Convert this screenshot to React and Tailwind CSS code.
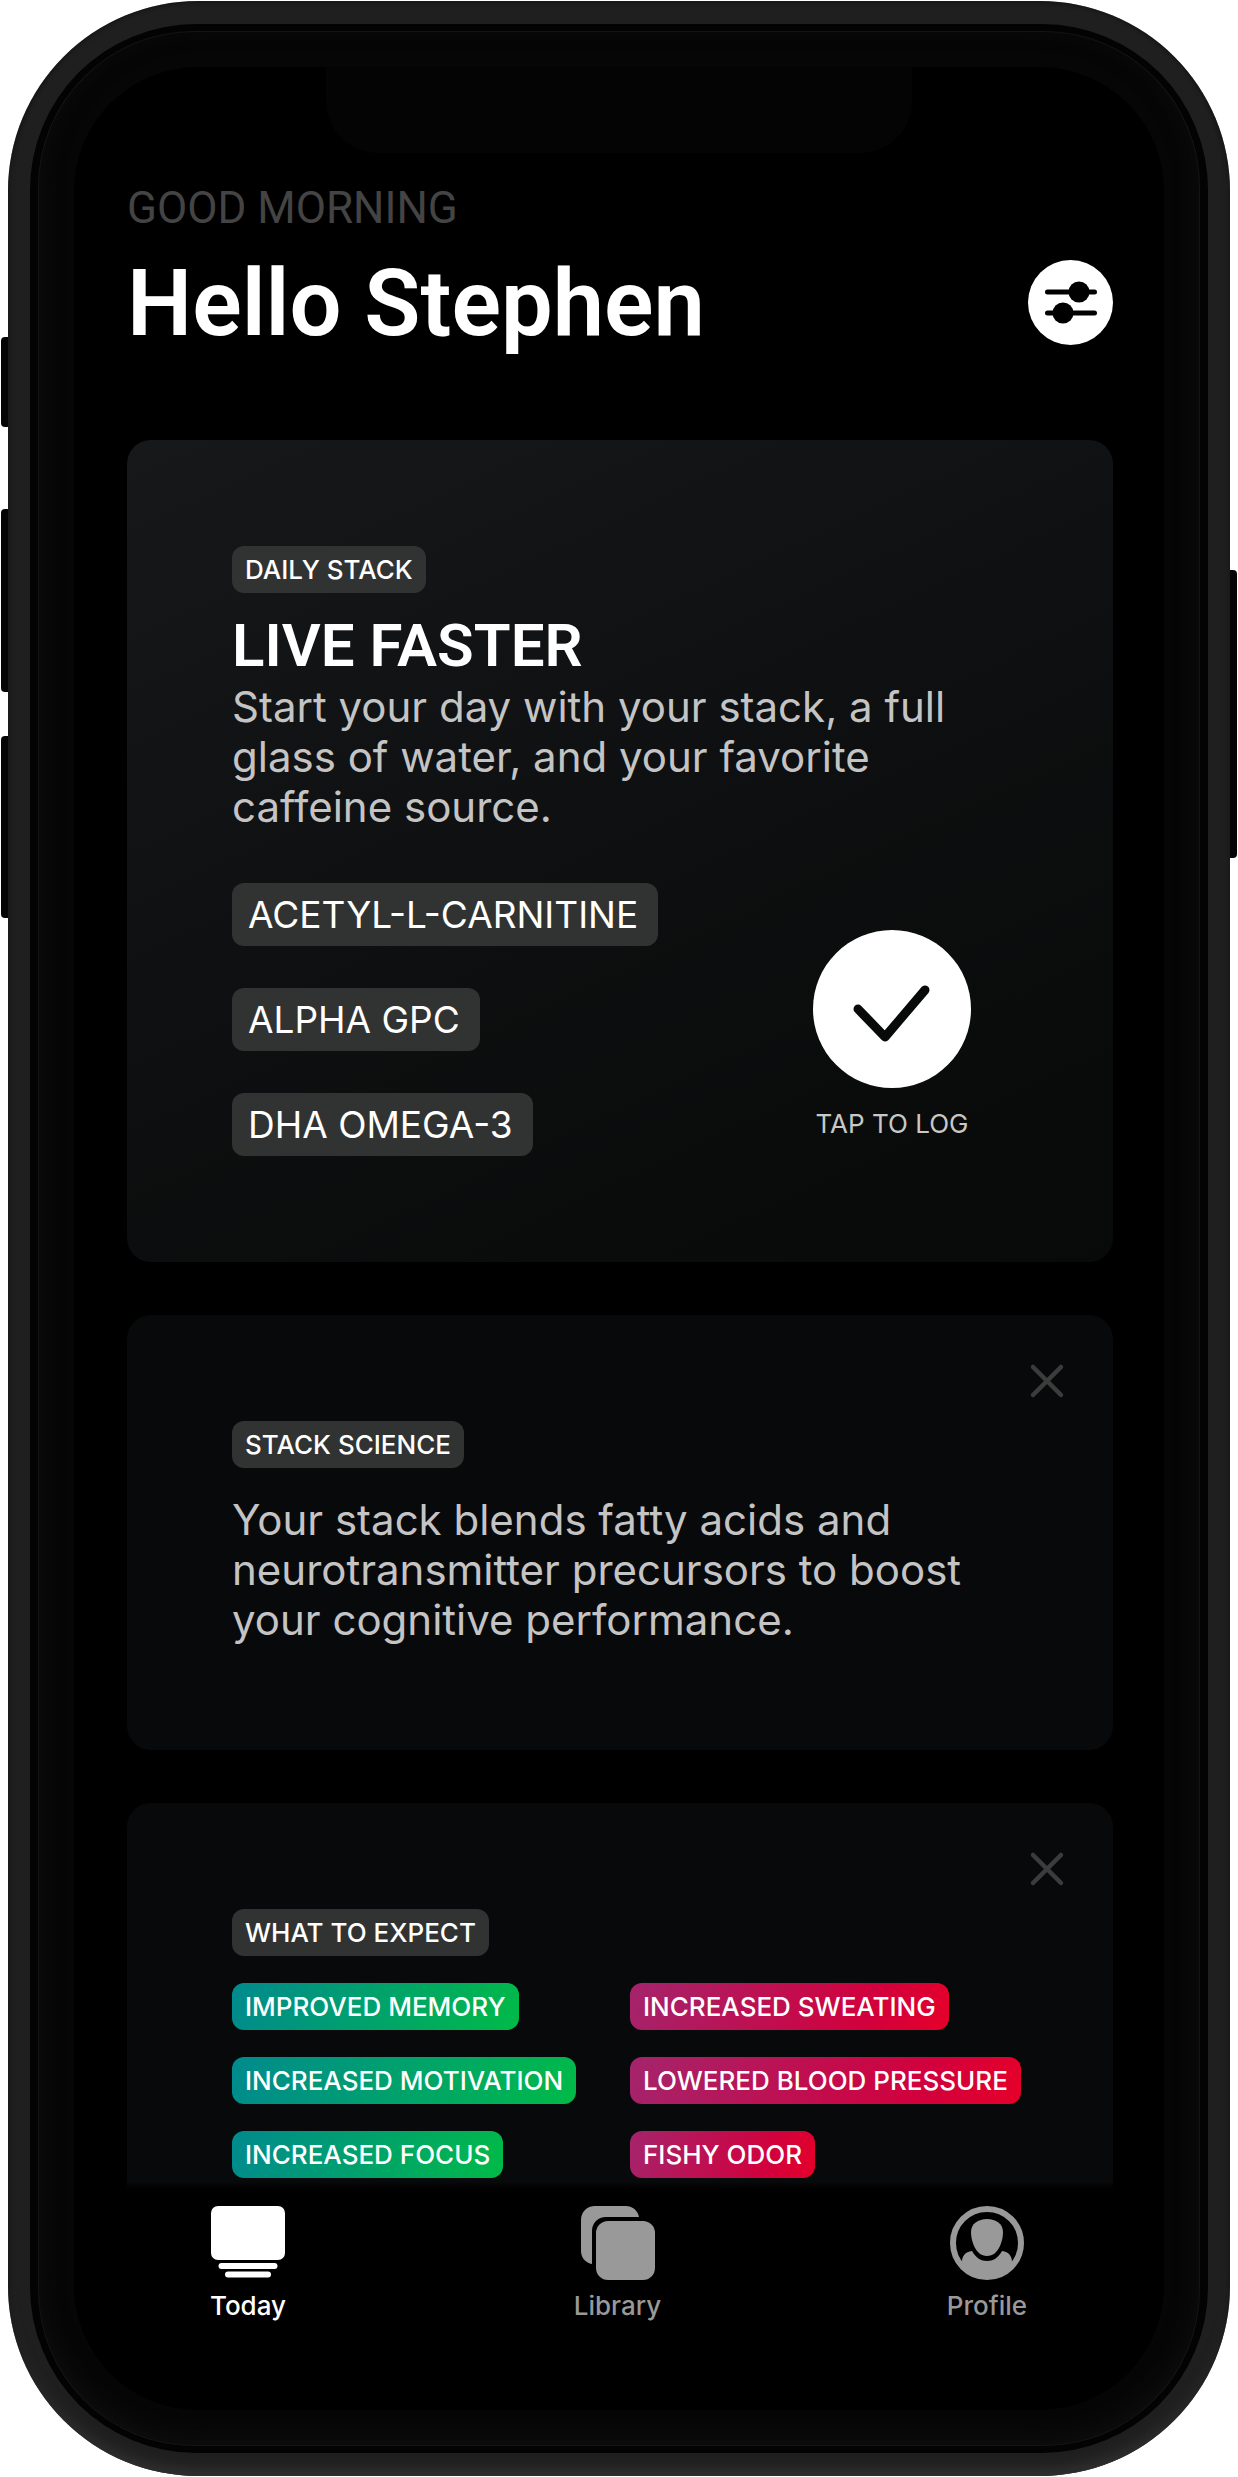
import React from "react";

const inter = "font-['Inter','Liberation_Sans',sans-serif]";
const roboto = "font-['Roboto','Liberation_Sans',sans-serif]";

function Label({ children }) {
  return (
    <h3 className="flex h-[47px] w-fit items-center rounded-xl bg-[#313332] px-[13px] text-[26px] leading-none font-medium text-white">
      {children}
    </h3>
  );
}

function Supplement({ children }) {
  return (
    <li className="flex h-[63px] w-fit items-center rounded-xl bg-[#313332] pr-5 pl-4 text-[37px] leading-none text-white">
      {children}
    </li>
  );
}

function Effect({ good, children }) {
  const tone = good
    ? "bg-linear-[110deg] from-[#008a8e] to-[#00ba48]"
    : "bg-linear-[110deg] from-[#a4246c] via-[#d2003c] via-75% to-[#e6002a]";
  return (
    <li
      className={`flex h-[47px] w-fit items-center rounded-xl px-[13px] text-[26px] leading-none font-medium whitespace-nowrap text-white ${tone}`}
    >
      {children}
    </li>
  );
}

function Dismiss({ label }) {
  return (
    <button
      type="button"
      aria-label={label}
      className="absolute top-12 right-12 size-9 text-[#3b3c3c]"
    >
      <svg viewBox="0 0 36 36" fill="none" stroke="currentColor" strokeWidth="4.5" strokeLinecap="round">
        <path d="M4 4 32 32M32 4 4 32" />
      </svg>
    </button>
  );
}

function TodayIcon() {
  return (
    <svg viewBox="0 0 74 74" className="size-[74px]" fill="currentColor" aria-hidden="true">
      <rect x="0" y="0" width="74" height="54" rx="7" />
      <rect x="7.5" y="57" width="59" height="6" rx="3" />
      <rect x="14" y="65.5" width="46" height="6" rx="3" />
    </svg>
  );
}

function LibraryIcon() {
  return (
    <svg viewBox="0 0 74 74" className="size-[74px]" fill="currentColor" aria-hidden="true">
      <path d="M14 0H45C52 0 57 5 58 11H25C17 11 11 17 11 25V58C5 57 0 52 0 45V14C0 6 6 0 14 0Z" />
      <rect x="15" y="15" width="59" height="59" rx="12" />
    </svg>
  );
}

function ProfileIcon() {
  return (
    <svg viewBox="0 0 74 74" className="size-[74px]" aria-hidden="true">
      <circle cx="37" cy="37" r="34" fill="none" stroke="currentColor" strokeWidth="6" />
      <path
        fill="currentColor"
        d="M37 13C46 13 53 18 53 26C53 34 49 50 37 50C25 50 21 34 21 26C21 18 28 13 37 13Z"
      />
      <path
        fill="currentColor"
        d="M12 56C12 50 15 46 22 45C26 52 31 55 37 55C43 55 48 52 52 45C59 46 62 50 62 56C56 65 48 73 37 73C26 73 18 65 12 56Z"
      />
    </svg>
  );
}

const tabs = [
  { name: "Today", Icon: TodayIcon, active: true },
  { name: "Library", Icon: LibraryIcon },
  { name: "Profile", Icon: ProfileIcon },
];

export default function App() {
  return (
    <div className={`relative bg-white px-2 py-px ${inter}`}>
      <div className="absolute top-[337px] left-px h-[90px] w-3 rounded-sm bg-[#060606]" />
      <div className="absolute top-[509px] left-px h-[183px] w-3 rounded-sm bg-[#060606]" />
      <div className="absolute top-[736px] left-px h-[182px] w-3 rounded-sm bg-[#060606]" />
      <div className="absolute top-[570px] right-px h-[288px] w-3 rounded-sm bg-[#060606]" />

      <div className="relative rounded-[190px] bg-[#1f1f1f] px-[22px] py-[23px] shadow-[inset_0_-14px_14px_-8px_#343434,inset_0_0_5px_#0c0c0c]">
        <div className="rounded-[166px] bg-[#030303] px-2 py-[7px]">
          <div className="rounded-[156px] bg-[#060606] p-9 shadow-[inset_0_0_0_1px_#141414,inset_0_-8px_24px_#0f0f0f]">
            <div className="relative rounded-[124px] bg-black">
              <div className="absolute inset-x-[252px] top-0 h-[86px] rounded-b-[52px] bg-[#040404]" />

              <header className="relative flex items-end justify-between pr-[51px] pl-[53px] pt-[113px]">
                <div className={roboto}>
                  <p className="text-[44px] leading-[56px] text-[#444]">GOOD MORNING</p>
                  <h1 className="mt-[14px] mb-2.5 text-[92px] leading-[107px] font-semibold text-white">Hello Stephen</h1>
                </div>
                <button
                  type="button"
                  aria-label="Settings"
                  className="mb-[22px] flex size-[85px] items-center justify-center rounded-full bg-white text-black"
                >
                  <svg viewBox="0 0 85 85" className="size-full" fill="currentColor" stroke="currentColor">
                    <path d="M19.5 32H66.5M19.5 53H66.5" strokeWidth="5" strokeLinecap="round" />
                    <circle cx="51" cy="32" r="10.5" stroke="none" />
                    <circle cx="35" cy="53" r="10.5" stroke="none" />
                  </svg>
                </button>
              </header>

              <main className="mt-[73px] flex flex-col gap-[53px] pr-[51px] pl-[53px]">
                <section className="rounded-3xl bg-linear-[155deg] from-[#17181a] via-[#0d0f10] to-[#080a09] px-[105px] py-[106px]">
                  <Label>DAILY STACK</Label>
                  <h2 className={`mt-4 text-[60px] leading-[73px] font-semibold text-white ${roboto}`}>LIVE FASTER</h2>
                  <p className="-mr-8 text-[42px] leading-[50px] text-[#c4c4c4]">
                    Start your day with your stack, a full
                    <br />
                    glass of water, and your favorite
                    <br />
                    caffeine source.
                  </p>
                  <div className="mt-[51px] flex items-end justify-between">
                    <ul className="flex flex-col gap-[42px]">
                      <Supplement>ACETYL-L-CARNITINE</Supplement>
                      <Supplement>ALPHA GPC</Supplement>
                      <Supplement>DHA OMEGA-3</Supplement>
                    </ul>
                    <button type="button" className="mr-[37px] mb-4 flex flex-col items-center gap-5 text-[#c8c8c8]">
                      <span className="flex size-[158px] items-center justify-center rounded-full bg-white">
                        <svg viewBox="0 0 158 158" className="size-full" fill="none" stroke="#080a09" strokeWidth="9" strokeLinecap="round" strokeLinejoin="round">
                          <path d="M45 79 72 107 112 60" />
                        </svg>
                      </span>
                      <span className="text-[26px] leading-8">TAP TO LOG</span>
                    </button>
                  </div>
                </section>

                <section className="relative rounded-3xl bg-[#08090b] px-[105px] pt-[106px] pb-[105px]">
                  <Dismiss label="Dismiss stack science" />
                  <Label>STACK SCIENCE</Label>
                  <p className="-mr-8 mt-[27px] text-[42px] leading-[50px] text-[#c4c4c4]">
                    Your stack blends fatty acids and
                    <br />
                    neurotransmitter precursors to boost
                    <br />
                    your cognitive performance.
                  </p>
                </section>

                <section className="relative rounded-t-3xl bg-linear-to-b from-[#08090b] via-[#08090b] via-97% to-black pt-[106px] pb-4 pl-[105px]">
                  <Dismiss label="Dismiss what to expect" />
                  <Label>WHAT TO EXPECT</Label>
                  <div className="mt-[27px] flex">
                    <ul className="flex w-[398px] flex-col gap-[27px]">
                      <Effect good>IMPROVED MEMORY</Effect>
                      <Effect good>INCREASED MOTIVATION</Effect>
                      <Effect good>INCREASED FOCUS</Effect>
                    </ul>
                    <ul className="flex flex-col gap-[27px]">
                      <Effect>INCREASED SWEATING</Effect>
                      <Effect>LOWERED BLOOD PRESSURE</Effect>
                      <Effect>FISHY ODOR</Effect>
                    </ul>
                  </div>
                </section>
              </main>

              <nav className="flex justify-between pt-3 pr-[122px] pb-[88px] pl-[119px]">
                {tabs.map(({ name, Icon, active }) => (
                  <a
                    key={name}
                    href={`#${name.toLowerCase()}`}
                    className={`flex w-[110px] flex-col items-center gap-2.5 text-[26px] leading-8 font-medium ${active ? "text-white" : "text-[#999]"}`}
                  >
                    <Icon />
                    {name}
                  </a>
                ))}
              </nav>
            </div>
          </div>
        </div>
      </div>
    </div>
  );
}
